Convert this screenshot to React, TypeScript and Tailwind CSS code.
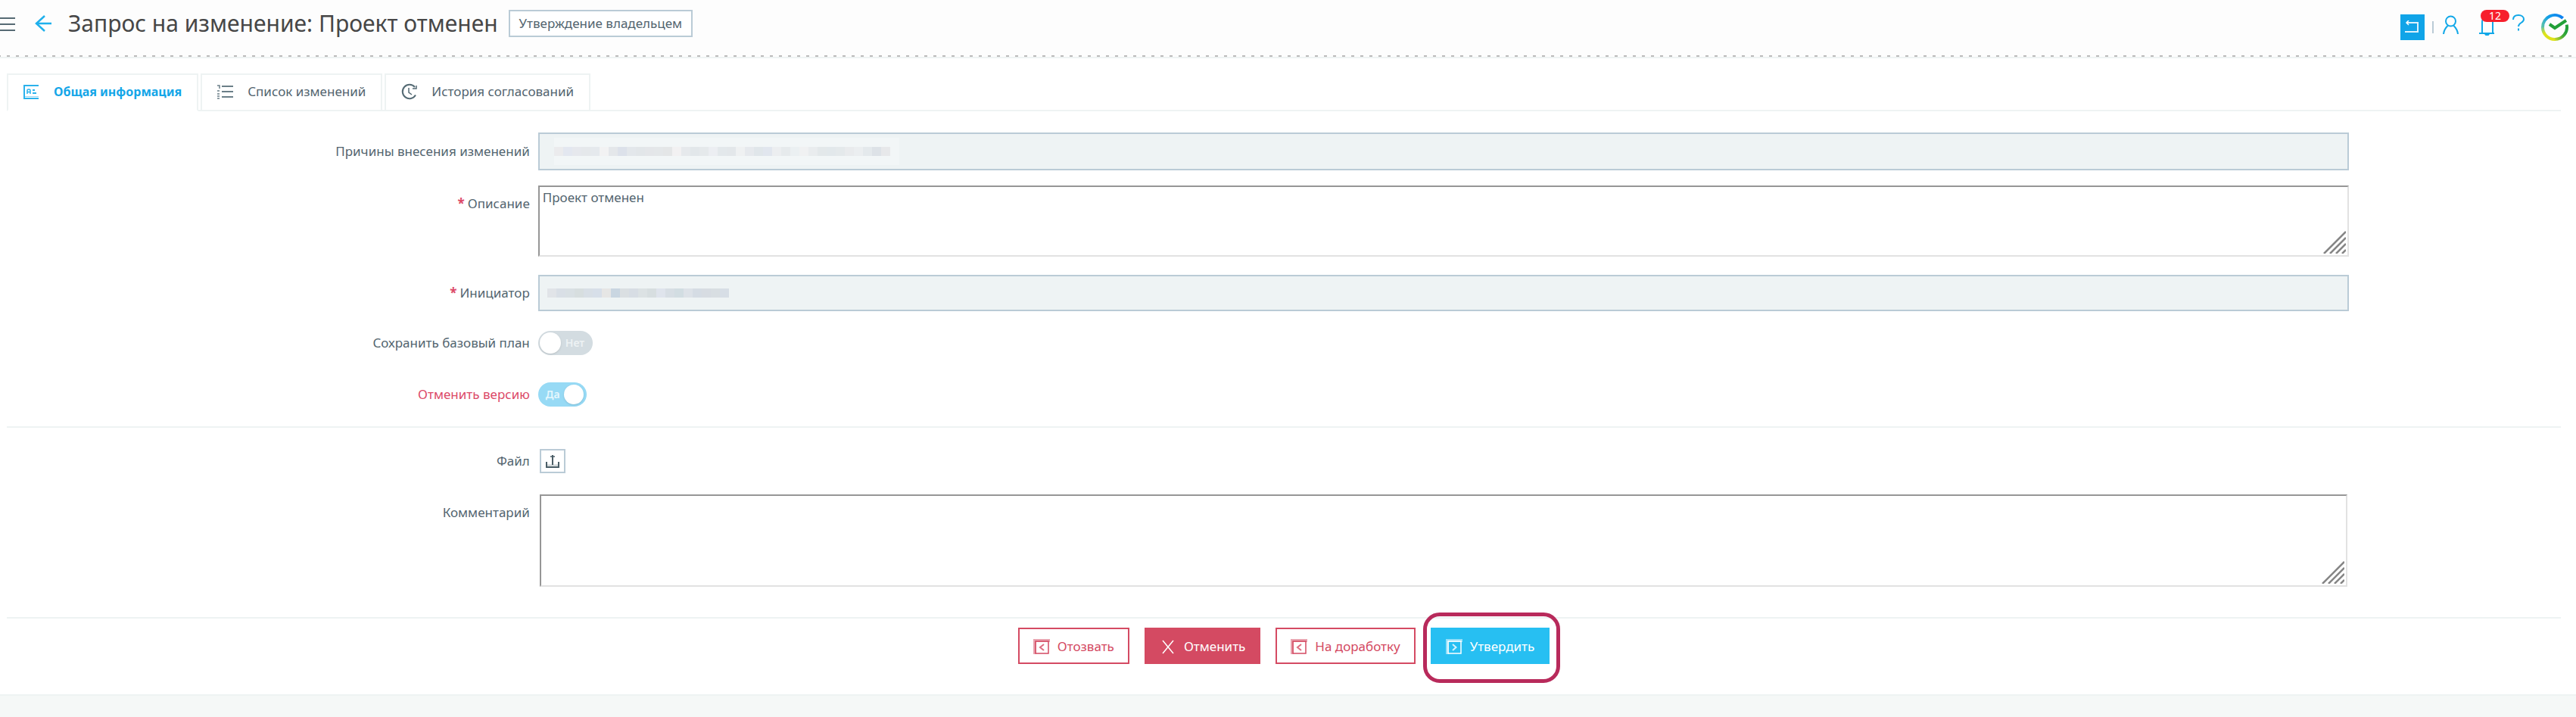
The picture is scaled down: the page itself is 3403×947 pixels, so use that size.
import { useState, type ReactNode } from "react";

const REASON_BLOCKS = [
  "#ebebed", "#e3e7f0", "#e6e8ed", "#e5e8eb", "#e5e9ed", "#f2f2f3", "#e4e7ea", "#dce1ea",
  "#e3e7eb", "#e2e6e9", "#e4e6e9", "#e4e7e9", "#e4e6e7", "#f2f1f2", "#e6e9ec", "#e2e7ea",
  "#e5e9eb", "#eceef2", "#e3e8eb", "#e3e7ea", "#eff1f2", "#e6e9ed", "#e0e6ea", "#e1e6ee",
  "#eceef0", "#e6eaec", "#ebf0f2", "#f0f1f2", "#e9ecee", "#e3e8ea", "#e2e8eb", "#e4e9eb",
  "#e9ebed", "#ebeef0", "#e4e9ec", "#dde2e7", "#e7e8ea",
];

const INITIATOR_BLOCKS = [
  "#e1e4e8", "#d9dfe6", "#d9e0e4", "#d7dedf", "#d8dfe6", "#d7dfe9", "#e6e6e5", "#c9d6e1",
  "#dadfe2", "#d7dde4", "#dce2e4", "#d7dee0", "#dfe4ec", "#d7dee4", "#d2dde2", "#dde2e8",
  "#d5dce4", "#d7dce2", "#d8dee2", "#d7dee6",
];

function BackToListIcon() {
  return (
    <svg width="20" height="18" viewBox="0 0 20 18" fill="none" stroke="#fff" strokeWidth="2">
      <path d="M2 3h15v12H0" strokeOpacity="0.85" />
      <path d="M5 0 2 3l3 3" strokeWidth="1.5" />
    </svg>
  );
}

function UserIcon() {
  return (
    <svg width="24" height="38" viewBox="0 0 24 38" fill="none" stroke="#12a8e8" strokeWidth="2">
      <circle cx="11.5" cy="11" r="6.5" />
      <path d="M2 28c.5-5 2.500-8 5.500-11M21 28c-.5-5-2.500-8-5.500-11" />
    </svg>
  );
}

function BellIcon() {
  return (
    <svg width="22" height="38" viewBox="0 0 22 38" fill="none" stroke="#12a8e8" strokeWidth="2">
      <path d="M5 27V12a6 6 0 0 1 14 0v15M1 27h20" />
      <path d="M8 28h7l-1.500 2h-4z" fill="#12a8e8" stroke="none" />
    </svg>
  );
}

function QuestionIcon() {
  return (
    <svg width="18" height="38" viewBox="0 0 18 38" fill="none" stroke="#12a8e8" strokeWidth="2">
      <path d="M2 9c0-4 3-6 7-6s7 2 7 5.500c0 5-7 4-7 9.500M9 20.500v3" />
    </svg>
  );
}

function BrandLogo() {
  return (
    <svg width="38" height="38" viewBox="0 0 38 38" fill="none" strokeWidth="4">
      <defs>
        <linearGradient id="ringTop" gradientUnits="userSpaceOnUse" x1="30" y1="5" x2="3" y2="19">
          <stop offset="0" stopColor="#0d7ff0" />
          <stop offset="0.6" stopColor="#14a0e8" />
          <stop offset="1" stopColor="#5cc3a8" />
        </linearGradient>
        <linearGradient id="ringLeft" gradientUnits="userSpaceOnUse" x1="3" y1="19" x2="14" y2="35">
          <stop offset="0" stopColor="#6fc79a" />
          <stop offset="0.4" stopColor="#dde31a" />
          <stop offset="1" stopColor="#dfe11a" />
        </linearGradient>
        <linearGradient id="ringRight" gradientUnits="userSpaceOnUse" x1="18" y1="35" x2="33" y2="24">
          <stop offset="0" stopColor="#cfdc2a" />
          <stop offset="0.6" stopColor="#4cae38" />
          <stop offset="1" stopColor="#21a038" />
        </linearGradient>
      </defs>
      <path d="M29.700 7.100A16 16 0 0 0 3 19" stroke="url(#ringTop)" />
      <path d="M3 19a16 16 0 0 0 16 16" stroke="url(#ringLeft)" />
      <path d="M19 35a16 16 0 0 0 15.700-19.300" stroke="url(#ringRight)" />
      <path d="m12 15 7 5 15-10" stroke="#21a038" />
    </svg>
  );
}

function InfoIcon() {
  return (
    <svg width="22" height="22" viewBox="0 0 22 22" fill="none" stroke="#2bb2ec" strokeWidth="2">
      <path d="M20 3H1v17h19" />
      <path d="M1 17.500h19" strokeWidth="1" strokeOpacity="0.5" />
      <path d="M5 14V9.500q0-1.500 2-1.500t2 1.500V14M5 11.500h4" strokeWidth="1.500" />
      <path d="M12 9h3M12 13h5" strokeWidth="2" />
    </svg>
  );
}

function ListIcon() {
  return (
    <svg width="22" height="22" viewBox="0 0 22 22" fill="none" stroke="#6b7f88" strokeWidth="2">
      <path d="M6 4h15M6 11h15M6 18h15" />
      <path d="M0 3h3v4M0 10h3M0 14h3M0 17h3M0 20h3" strokeWidth="1.500" />
    </svg>
  );
}

function HistoryIcon() {
  return (
    <svg width="22" height="22" viewBox="0 0 22 22" fill="none" stroke="#546a74" strokeWidth="2">
      <path d="M18 5A9.200 9.200 0 1 0 19 15.500" />
      <path d="M15 7h5V3M10 6v6l4 3" strokeWidth="1.500" />
    </svg>
  );
}

function BoxedChevron({ flip = false }: { flip?: boolean }) {
  return (
    <svg width="22" height="22" viewBox="0 0 22 22" fill="none" stroke="currentColor">
      <path d="M2 1v20M4 3h18" strokeWidth="4" strokeOpacity="0.5" />
      <path d="M3 4h17v16H3z" strokeWidth="1.500" />
      <path d={flip ? "m9 8 4.500 4L9 16" : "M14 8l-5 4 5 4"} strokeWidth="2" strokeOpacity="0.8" />
    </svg>
  );
}

function CrossIcon() {
  return (
    <svg width="22" height="22" viewBox="0 0 22 22" fill="none" stroke="currentColor" strokeWidth="1.500">
      <path d="m4 3 14 17M18 3 4 20" />
    </svg>
  );
}

function ResizeGrip() {
  return (
    <svg
      className="absolute right-1 bottom-1 pointer-events-none"
      width="30"
      height="30"
      viewBox="0 0 30 30"
      stroke="#868686"
      strokeWidth="2.500"
    >
      <path d="M1 30 30 1M9 30 30 9M17 30 30 17M25 30l5-5" />
    </svg>
  );
}

interface FormRowProps {
  label: string;
  htmlFor: string;
  required?: boolean;
  danger?: boolean;
  top?: boolean;
  children: ReactNode;
}

function FormRow({ label, htmlFor, required, danger, top, children }: FormRowProps) {
  return (
    <div className={`grid grid-cols-[20.8%_70.9%] ${top ? "items-start" : "items-center"}`}>
      <label
        htmlFor={htmlFor}
        className={`pr-[11px] text-right ${top ? "pt-3" : ""} ${danger ? "text-[#dc4a68]" : ""}`}
      >
        {required && <span className="mr-1 font-bold text-[#dc4a68]">*</span>}
        {label}
      </label>
      <div>{children}</div>
    </div>
  );
}

function HiddenValue({ blocks, haze }: { blocks: string[]; haze?: boolean }) {
  return (
    <div
      className={`absolute top-1/2 -translate-y-1/2 flex py-3 pointer-events-none ${
        haze ? "left-[21px] pr-3 bg-[#f2f6f7]" : "left-3"
      }`}
    >
      {blocks.map((color, i) => (
        <span key={i} className="w-3 h-3" style={{ backgroundColor: color }} />
      ))}
    </div>
  );
}

interface ToggleProps {
  id: string;
  checked: boolean;
  onChange: (value: boolean) => void;
}

function Toggle({ id, checked, onChange }: ToggleProps) {
  return (
    <div
      className={`relative flex items-center h-8 rounded-full text-sm leading-5 font-semibold ${
        checked
          ? "w-16 pl-[10px] pr-1 justify-between bg-[#97daf5] text-[#e6f7fd]"
          : "w-[72px] pl-0.5 gap-1.5 bg-[#d3dce1] text-[#edf2f4]"
      }`}
    >
      <input
        id={id}
        type="checkbox"
        checked={checked}
        onChange={(e) => onChange(e.target.checked)}
        className="absolute inset-0 w-full h-full opacity-0 cursor-pointer"
      />
      {checked ? (
        <>
          <span>Да</span>
          <span className="w-[26px] h-[26px] rounded-full bg-white shadow-sm" />
        </>
      ) : (
        <>
          <span className="w-7 h-7 rounded-full bg-white shadow-sm" />
          <span>Нет</span>
        </>
      )}
    </div>
  );
}

const tabs = [
  { id: "info", label: "Общая информация", icon: <InfoIcon /> },
  { id: "changes", label: "Список изменений", icon: <ListIcon /> },
  { id: "history", label: "История согласований", icon: <HistoryIcon /> },
];

const readonlyInput = "block w-full border-2 border-[#bacbd6] bg-[#eef3f4] outline-none";
const textArea =
  "block w-full px-1 pt-0.5 border-2 border-t-[#969696] border-l-[#969696] border-r-[#e2e2e2] border-b-[#e2e2e2] bg-white resize-none outline-none leading-6";
const outlineButton =
  "flex items-center gap-[10px] h-12 px-[18px] pt-0.5 border-2 border-[#d44a62] bg-white text-[#d44a62] cursor-pointer";
const solidButton = "flex items-center gap-[10px] h-12 px-5 pt-0.5 text-white cursor-pointer";

export default function App() {
  const [activeTab, setActiveTab] = useState("info");
  const [savePlan, setSavePlan] = useState(false);
  const [cancelVersion, setCancelVersion] = useState(true);

  return (
    <div className="min-h-screen flex flex-col bg-[#f5f8f7] font-['Noto_Sans',sans-serif] text-[17px] leading-6 text-[#53656f]">
      <header className="bg-[#fdfdfd] border-b-2 border-[#eef3f3]">
        <div className="flex items-center justify-between h-[62px]">
          <div className="flex items-center">
            <button aria-label="Меню" className="pt-0.5 cursor-pointer">
              <svg width="20" height="20" viewBox="0 0 20 20" stroke="#566a74" strokeWidth="2">
                <path d="M0 2h20M0 10h20M0 18h20" />
              </svg>
            </button>
            <a href="#back" aria-label="Назад" className="ml-[26px]">
              <svg width="22" height="22" viewBox="0 0 22 22" fill="none" stroke="#1fb0ec" strokeWidth="2.500">
                <path d="M2 11h20M13 1 2 11l11 10" />
              </svg>
            </a>
            <h1 className="ml-[22px] text-[30px] leading-10 text-[#474747]">
              Запрос на изменение: Проект отменен
            </h1>
            <span className="ml-[14px] px-3 py-1 border-2 border-[#bacbd6] bg-white text-[#53656f]">
              Утверждение владельцем
            </span>
          </div>

          <div className="flex items-center pt-[10px] mr-[9px]">
            <button aria-label="К списку" className="flex items-center justify-center w-8 h-[34px] bg-[#10a4e8] cursor-pointer">
              <BackToListIcon />
            </button>
            <span className="ml-[10px] w-0.5 h-4 bg-[#bacbd6]" />
            <button aria-label="Профиль" className="ml-[11px] cursor-pointer">
              <UserIcon />
            </button>
            <button aria-label="Уведомления" className="relative ml-6 cursor-pointer">
              <BellIcon />
              <span className="absolute left-[3px] -top-1 w-[38px] h-4 rounded-full bg-[#f71f2c] text-white text-sm leading-4 text-center">
                12
              </span>
            </button>
            <a href="#help" aria-label="Справка" className="ml-[22px]">
              <QuestionIcon />
            </a>
            <a href="#home" aria-label="Главная" className="ml-5">
              <BrandLogo />
            </a>
          </div>
        </div>
        <div className="mt-[11px] h-0.5 bg-[repeating-linear-gradient(to_right,#bbbbbb_0_1px,transparent_1px_9px,#bbbbbb_9px_12px)]" />
      </header>

      <main className="pl-[9px] pr-5 pt-5 pb-10 bg-white border-b-2 border-[#eef3f3]">
        <div role="tablist" className="flex gap-[3px] h-[50px] border-b-2 border-[#eef3f3]">
          {tabs.map((tab) => (
            <button
              key={tab.id}
              role="tab"
              aria-selected={activeTab === tab.id}
              onClick={() => setActiveTab(tab.id)}
              className={`flex items-center gap-[18px] h-[50px] px-5 pb-0.5 border-2 border-[#eef3f3] bg-white cursor-pointer ${
                activeTab === tab.id ? "border-b-white text-base font-bold text-[#14a6e8]" : ""
              }`}
            >
              {tab.icon}
              {tab.label}
            </button>
          ))}
        </div>

        <form onSubmit={(e) => e.preventDefault()}>
          <div className="pt-7">
            <FormRow label="Причины внесения изменений" htmlFor="reason">
              <div className="relative">
                <input id="reason" type="text" readOnly className={`${readonlyInput} h-[50px]`} />
                <HiddenValue blocks={REASON_BLOCKS} haze />
              </div>
            </FormRow>
          </div>

          <div className="pt-5">
            <FormRow label="Описание" htmlFor="description" required top>
              <div className="relative">
                <textarea id="description" defaultValue="Проект отменен" className={`${textArea} h-[94px]`} />
                <ResizeGrip />
              </div>
            </FormRow>
          </div>

          <div className="pt-6">
            <FormRow label="Инициатор" htmlFor="initiator" required>
              <div className="relative">
                <input id="initiator" type="text" readOnly className={`${readonlyInput} h-12`} />
                <HiddenValue blocks={INITIATOR_BLOCKS} />
              </div>
            </FormRow>
          </div>

          <div className="pt-[26px]">
            <FormRow label="Сохранить базовый план" htmlFor="save-plan">
              <Toggle id="save-plan" checked={savePlan} onChange={setSavePlan} />
            </FormRow>
          </div>

          <div className="pt-9 pb-[26px] border-b-2 border-[#eef3f3]">
            <FormRow label="Отменить версию" htmlFor="cancel-version" danger>
              <Toggle id="cancel-version" checked={cancelVersion} onChange={setCancelVersion} />
            </FormRow>
          </div>

          <div className="pt-7">
            <FormRow label="Файл" htmlFor="file">
              <button
                id="file"
                type="button"
                className="flex items-center justify-center w-[34px] h-8 ml-0.5 border-2 border-[#bacbd6] bg-white cursor-pointer"
              >
                <svg width="18" height="18" viewBox="0 0 18 18" fill="none" stroke="#4a5d66" strokeWidth="2">
                  <path d="M1 10v7h16v-7" />
                  <path d="M9 14V1" />
                  <path d="M6 3h6" strokeWidth="1.500" />
                  <path d="M2 14.500h14" strokeOpacity="0.3" />
                </svg>
              </button>
            </FormRow>
          </div>

          <div className="pt-7 pb-10 border-b-2 border-[#eef3f3]">
            <FormRow label="Комментарий" htmlFor="comment" top>
              <div className="relative mx-0.5">
                <textarea id="comment" className={`${textArea} h-[122px]`} />
                <ResizeGrip />
              </div>
            </FormRow>
          </div>

          <div className="flex justify-center gap-5 pt-3">
            <button type="button" className={outlineButton}>
              <BoxedChevron />
              Отозвать
            </button>
            <button type="button" className={`${solidButton} bg-[#d44a62]`}>
              <CrossIcon />
              Отменить
            </button>
            <button type="button" className={outlineButton}>
              <BoxedChevron />
              На доработку
            </button>
            <div className="relative">
              <button type="submit" className={`${solidButton} bg-[#27bff2]`}>
                <BoxedChevron flip />
                Утвердить
              </button>
              <span className="absolute -left-[10px] -right-[14px] -top-5 -bottom-[25px] border-[5px] border-[#b82a5b] rounded-[22px] pointer-events-none" />
            </div>
          </div>
        </form>
      </main>
    </div>
  );
}
